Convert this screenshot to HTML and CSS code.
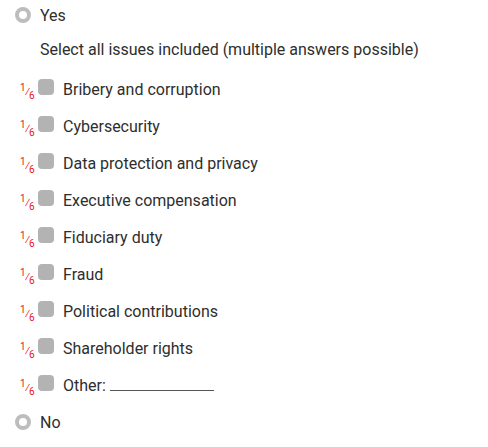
FILE: index.html
```html
<!DOCTYPE html>
<html>
<head>
<meta charset="utf-8">
<link rel="stylesheet" href="styles.css">
</head>
<body>
<div class="form">
  <div class="radio-row"><span class="radio"></span><span class="label">Yes</span></div>
  <div class="hint">Select all issues included (multiple answers possible)</div>
  <div class="check-row"><span class="frac"><sup>1</sup>&frasl;<sub>6</sub></span><span class="box"></span><span class="label">Bribery and corruption</span></div>
  <div class="check-row"><span class="frac"><sup>1</sup>&frasl;<sub>6</sub></span><span class="box"></span><span class="label">Cybersecurity</span></div>
  <div class="check-row"><span class="frac"><sup>1</sup>&frasl;<sub>6</sub></span><span class="box"></span><span class="label">Data protection and privacy</span></div>
  <div class="check-row"><span class="frac"><sup>1</sup>&frasl;<sub>6</sub></span><span class="box"></span><span class="label">Executive compensation</span></div>
  <div class="check-row"><span class="frac"><sup>1</sup>&frasl;<sub>6</sub></span><span class="box"></span><span class="label">Fiduciary duty</span></div>
  <div class="check-row"><span class="frac"><sup>1</sup>&frasl;<sub>6</sub></span><span class="box"></span><span class="label">Fraud</span></div>
  <div class="check-row"><span class="frac"><sup>1</sup>&frasl;<sub>6</sub></span><span class="box"></span><span class="label">Political contributions</span></div>
  <div class="check-row"><span class="frac"><sup>1</sup>&frasl;<sub>6</sub></span><span class="box"></span><span class="label">Shareholder rights</span></div>
  <div class="check-row"><span class="frac"><sup>1</sup>&frasl;<sub>6</sub></span><span class="box"></span><span class="label">Other: <span class="blank"></span></span></div>
  <div class="radio-row"><span class="radio"></span><span class="label">No</span></div>
</div>
</body>
</html>
```
FILE: styles.css
```css
html, body {
  margin: 0;
  padding: 0;
  background: #fff;
}
body {
  font-family: Roboto, "Liberation Sans", sans-serif;
  font-size: 16px;
  color: #2e2e2e;
}
.form {
  display: flex;
  flex-direction: column;
  padding: 5px 0 0 15px;
}
.radio-row {
  display: flex;
  align-items: center;
  gap: 9px;
  height: 20px;
}
.radio {
  width: 16px;
  height: 16px;
  box-sizing: border-box;
  border: 4px solid #bdbdbd;
  border-radius: 50%;
}
.hint {
  margin: 15px 0 0 25px;
  height: 20px;
  line-height: 20px;
}
.check-row {
  display: flex;
  align-items: center;
  height: 20px;
  margin-top: 17px;
  margin-left: 5px;
}
.hint + .check-row {
  margin-top: 19px;
}
.check-row + .radio-row {
  margin-top: 17px;
}
.frac {
  color: #e8141c;
  font-size: 12px;
  width: 18px;
  line-height: 1;
  position: relative;
  top: 3px;
  letter-spacing: -1px;
}
.frac sup, .frac sub {
  font-size: 10px;
  line-height: 0;
}
.box {
  width: 16px;
  height: 16px;
  border-radius: 4px;
  background: #b3b3b3;
  margin-right: 9px;
  position: relative;
  top: -2px;
}
.blank {
  display: inline-block;
  width: 104px;
  border-bottom: 1px solid #555;
  vertical-align: baseline;
}
```
